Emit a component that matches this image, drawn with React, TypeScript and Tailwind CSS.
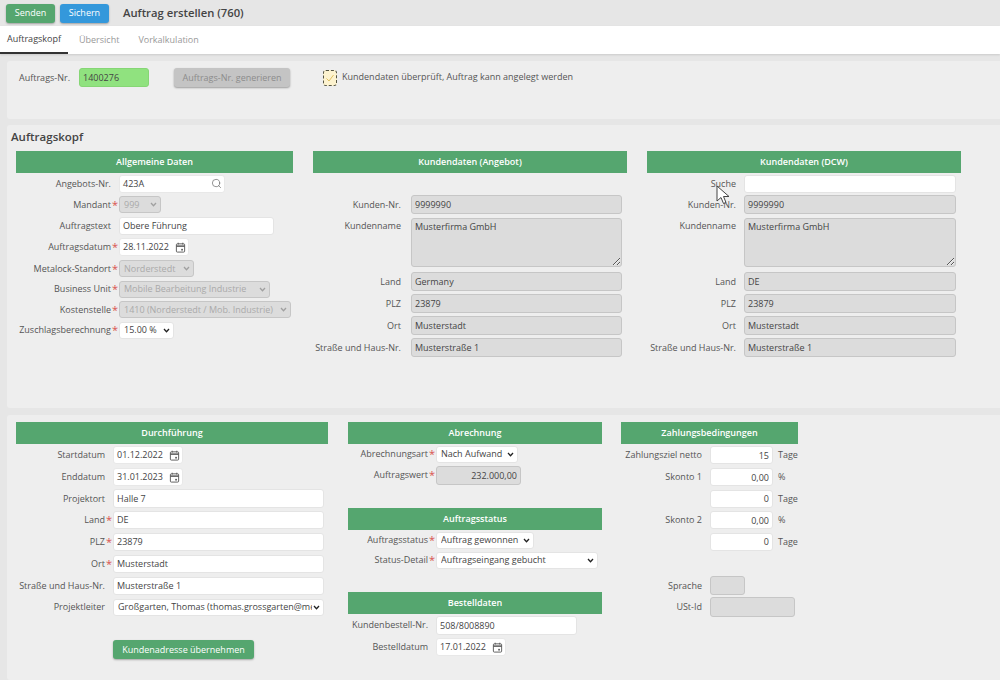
import React from "react";
import { Search } from "lucide-react";

const box = "block h-full w-full rounded-[3px] border px-[3px] text-[9px] text-[#444] outline-none";
const white = "bg-white border-[#e4e4e4]";
const gray = "bg-[#dcdcdc] border-[#c6c6c6]";

function Cal() {
  return (
    <svg viewBox="0 0 12 12" className="h-[11px] w-[11px] shrink-0" fill="none" stroke="#555" strokeWidth="1">
      <rect x="1.5" y="2" width="9" height="9" rx="1" />
      <path d="M1.5 4.5h9" strokeWidth="1.6" />
      <path d="M3.5 .8v2M8.5 .8v2" />
      <rect x="6.8" y="7.5" width="1.8" height="1.8" fill="#555" stroke="none" />
    </svg>
  );
}

function Header({ children }: { children: React.ReactNode }) {
  return (
    <div className="flex h-[22px] items-center justify-center bg-[#55a66f] text-[9px] font-semibold text-white">
      {children}
    </div>
  );
}

function Row({
  label,
  star,
  lw,
  h = 22,
  wide,
  children,
}: {
  label?: string;
  star?: boolean;
  lw: string;
  h?: number;
  wide?: boolean;
  children: React.ReactNode;
}) {
  return (
    <div className="flex items-center" style={{ height: h }}>
      <div className={`${lw} flex shrink-0 justify-end whitespace-nowrap text-[9px] text-[#555]`}>
        <span>{label}</span>
        <span className={`${wide ? "w-[10px]" : "w-[8px]"} inline-block pl-[1px] text-[11px] leading-[13px] text-[#d9534f]`}>{star ? "*" : ""}</span>
      </div>
      {children}
    </div>
  );
}

function Text({ v, w, gr, right, h = "h-[18px]" }: { v: string; w: string; gr?: boolean; right?: boolean; h?: string }) {
  return (
    <div className={`${w} ${h} shrink-0`}>
      <input readOnly value={v} className={`${box} ${gr ? gray : white} ${right ? "text-right" : ""}`} />
    </div>
  );
}

function DateF({ v }: { v: string }) {
  return (
    <div className="flex h-[18px] w-[70px] shrink-0 items-center justify-between rounded-[3px] border border-[#e8e8e8] bg-white pl-[3px] pr-[2px] text-[9px] text-[#444]">
      <span>{v}</span>
      <Cal />
    </div>
  );
}

function Sel({ v, w, disabled }: { v: string; w: string; disabled?: boolean }) {
  return (
    <div className={`${w} relative h-[17px] shrink-0`}>
      <select
        disabled={disabled}
        defaultValue={v}
        className={`block h-full w-full appearance-none rounded-[3px] border pl-[4px] pr-[11px] text-[9px] outline-none ${
          disabled ? "border-[#c6c6c6] bg-[#dcdcdc] text-[#aaa] opacity-100" : "border-[#e4e4e4] bg-white text-[#444]"
        }`}
      >
        <option>{v}</option>
      </select>
      <svg
        viewBox="0 0 8 6"
        className="pointer-events-none absolute right-[4px] top-[6px] h-[5px] w-[7px]"
        fill="none"
        stroke={disabled ? "#a0a0a0" : "#222"}
        strokeWidth="1.6"
      >
        <path d="M1 1.2 4 4.4l3-3.2" />
      </svg>
    </div>
  );
}

function Btn({ c, children }: { c: string; children: React.ReactNode }) {
  return (
    <button className={`flex h-[19px] w-[49px] items-center justify-center rounded-[3px] text-[9px] text-white shadow-[0_1px_2px_rgba(0,0,0,0.3)] ${c}`}>
      {children}
    </button>
  );
}

function Customer({ lw, land, suche, wide, f }: { lw: string; land: string; suche?: boolean; wide?: boolean; f: string }) {
  return (
    <div>
      {suche ? (
        <Row label="Suche" lw={lw} h={21} wide={wide}>
          <Text v="" w={f} />
        </Row>
      ) : (
        <div className="h-[21px]" />
      )}
      <Row label="Kunden-Nr." lw={lw} h={21} wide={wide}><Text v="9999990" w={f} gr h="h-[19px]" /></Row>
      <div className="flex pt-[3px]">
        <div className={`${lw} flex shrink-0 justify-end pt-px text-[9px] text-[#555]`}>
          <span>Kundenname</span><span className={wide ? "w-[10px]" : "w-[8px]"} />
        </div>
        <textarea
          readOnly
          value="Musterfirma GmbH"
          className={`${f} block h-[49px] shrink-0 rounded-[3px] border border-[#c6c6c6] bg-[#dcdcdc] px-[3px] py-[1px] text-[9px] text-[#444] outline-none`}
        />
      </div>
      <div className="flex flex-col gap-px pt-[4px]">
        <Row label="Land" lw={lw} h={21} wide={wide}><Text v={land} w={f} gr h="h-[19px]" /></Row>
        <Row label="PLZ" lw={lw} h={21} wide={wide}><Text v="23879" w={f} gr h="h-[19px]" /></Row>
        <Row label="Ort" lw={lw} h={21} wide={wide}><Text v="Musterstadt" w={f} gr h="h-[19px]" /></Row>
        <Row label="Straße und Haus-Nr." lw={lw} h={21} wide={wide}><Text v="Musterstraße 1" w={f} gr h="h-[19px]" /></Row>
      </div>
    </div>
  );
}

export default function App() {
  const l1 = "w-[103px]";
  const l4 = "w-[97px]";
  const l5 = "w-[88px]";
  const l6 = "w-[89px]";
  const f = "w-[211px]";
  const unit = "ml-[5px] text-[9px] text-[#555]";
  return (
    <div className="relative h-[680px] w-[1000px] overflow-hidden bg-[#e6e6e6] text-[#555]" style={{ fontFamily: '"Open Sans", sans-serif' }}>
      <div className="flex h-[26px] items-center gap-[5px] pl-[6px]">
        <Btn c="bg-[#55a66f]">Senden</Btn>
        <Btn c="bg-[#3498db]">Sichern</Btn>
        <div className="ml-[9px] text-[11.25px] font-semibold text-[#444]">Auftrag erstellen (760)</div>
      </div>

      <div className="flex h-[28px] items-center bg-white text-[9px] text-[#999] shadow-[0_1px_2px_rgba(0,0,0,0.12)]">
        <div className="flex h-full w-[68px] items-center justify-center border-b-2 border-[#333] text-[#444]">Auftragskopf</div>
        <span className="ml-[11px]">Übersicht</span>
        <span className="ml-[19px]">Vorkalkulation</span>
      </div>

      <div className="ml-[7px] mt-[7px] flex h-[58px] items-start rounded-l-[3px] bg-[#eeeeee] pl-[12px] pt-[7px] text-[9px]">
        <span className="mt-[3px] w-[60px]">Auftrags-Nr.</span>
        <input readOnly value="1400276" className="block h-[19px] w-[70px] rounded-[3px] border border-[#86d675] bg-[#90e27f] px-[3px] text-[9px] text-[#444] outline-none" />
        <button className="ml-[25px] block h-[19px] w-[116px] rounded-[3px] bg-[#c4c4c4] text-[9px] text-[#8c8c8c] shadow-[0_1px_2px_rgba(0,0,0,0.35)]">Auftrags-Nr. generieren</button>
        <div className="ml-[33px] mt-[2px] flex h-[16px] w-[14px] items-center justify-center rounded-[3px] border border-dashed border-[#554] bg-[#fdf3cf]">
          <svg viewBox="0 0 10 10" className="h-[10px] w-[10px]" fill="none" stroke="#e0c060" strokeWidth="1"><path d="M1.5 5.5 4 8l4.5-6" /></svg>
        </div>
        <span className="ml-[5px] mt-[2px]">Kundendaten überprüft, Auftrag kann angelegt werden</span>
      </div>

      <div className="ml-[7px] mt-[6px] h-[283px] rounded-l-[3px] bg-[#eeeeee] pl-[4px]">
        <div className="h-[26px] pt-[4px] text-[11.5px] leading-[16px] font-semibold text-[#444]">Auftragskopf</div>
        <div className="flex gap-[20px] pl-[5px]">
          <div className="w-[277px]">
            <Header>Allgemeine Daten</Header>
            <Row label="Angebots-Nr." lw={l1} h={21}>
              <div className="flex h-[18px] w-[106px] items-center justify-between rounded-[3px] border border-[#e8e8e8] bg-white pl-[3px] pr-[2px] text-[9px] text-[#444]">
                <span>423A</span><Search size={11} strokeWidth={1.5} color="#666" />
              </div>
            </Row>
            <Row label="Mandant" star lw={l1} h={21}><Sel v="999" w="w-[42px]" disabled /></Row>
            <Row label="Auftragstext" lw={l1} h={21}><Text v="Obere Führung" w="w-[155px]" /></Row>
            <Row label="Auftragsdatum" star lw={l1} h={22}><DateF v="28.11.2022" /></Row>
            <Row label="Metalock-Standort" star lw={l1} h={21}><Sel v="Norderstedt" w="w-[75px]" disabled /></Row>
            <Row label="Business Unit" star lw={l1} h={20}><Sel v="Mobile Bearbeitung Industrie" w="w-[151px]" disabled /></Row>
            <Row label="Kostenstelle" star lw={l1} h={21}><Sel v="1410 (Norderstedt / Mob. Industrie)" w="w-[172px]" disabled /></Row>
            <Row label="Zuschlagsberechnung" star lw={l1} h={20}><Sel v="15.00 %" w="w-[55px]" /></Row>
          </div>
          <div className="w-[314px]">
            <Header>Kundendaten (Angebot)</Header>
            <Customer lw="w-[98px]" land="Germany" wide f="w-[211px]" />
          </div>
          <div className="w-[314px]">
            <Header>Kundendaten (DCW)</Header>
            <Customer lw="w-[97px]" land="DE" suche f="w-[212px]" />
          </div>
        </div>
      </div>

      <div className="ml-[7px] mt-[7px] flex h-[265px] rounded-l-[3px] bg-[#eeeeee] pl-[9px] pt-[7px]">
        <div className="w-[312px]">
          <Header>Durchführung</Header>
          <Row label="Startdatum" lw={l4}><DateF v="01.12.2022" /></Row>
          <Row label="Enddatum" lw={l4}><DateF v="31.01.2023" /></Row>
          <Row label="Projektort" lw={l4} h={21}><Text v="Halle 7" w={f} h="h-[19px]" /></Row>
          <Row label="Land" star lw={l4} h={21}><Text v="DE" w={f} /></Row>
          <Row label="PLZ" star lw={l4} h={23}><Text v="23879" w={f} /></Row>
          <Row label="Ort" star lw={l4} h={21}><Text v="Musterstadt" w={f} /></Row>
          <Row label="Straße und Haus-Nr." lw={l4} h={23}><Text v="Musterstraße 1" w={f} /></Row>
          <Row label="Projektleiter" lw={l4} h={20}><Sel v="Großgarten, Thomas (thomas.grossgarten@metalock.de)" w={f} /></Row>
          <div className="pl-[97px] pt-[23px]">
            <button className="block h-[19px] w-[141px] rounded-[3px] bg-[#55a66f] text-[9px] text-white shadow-[0_1px_2px_rgba(0,0,0,0.3)]">Kundenadresse übernehmen</button>
          </div>
        </div>

        <div className="ml-[20px] w-[254px]">
          <Header>Abrechnung</Header>
          <Row label="Abrechnungsart" star lw={l5} h={20}><Sel v="Nach Aufwand" w="w-[82px]" /></Row>
          <Row label="Auftragswert" star lw={l5} h={22}><Text v="232.000,00" w="w-[85px]" gr right h="h-[19px]" /></Row>
          <div className="h-[22px]" />
          <Header>Auftragsstatus</Header>
          <Row label="Auftragsstatus" star lw={l5} h={20}><Sel v="Auftrag gewonnen" w="w-[98px]" /></Row>
          <Row label="Status-Detail" star lw={l5} h={20}><Sel v="Auftragseingang gebucht" w="w-[162px]" /></Row>
          <div className="h-[22px]" />
          <Header>Bestelldaten</Header>
          <Row label="Kundenbestell-Nr." lw={l5}><Text v="508/8008890" w="w-[141px]" h="h-[19px]" /></Row>
          <Row label="Bestelldatum" lw={l5}><DateF v="17.01.2022" /></Row>
        </div>

        <div className="ml-[19px] w-[177px]">
          <Header>Zahlungsbedingungen</Header>
          <Row label="Zahlungsziel netto" lw={l6}><Text v="15" w="w-[63px]" right /><span className={unit}>Tage</span></Row>
          <Row label="Skonto 1" lw={l6}><Text v="0,00" w="w-[63px]" right /><span className={unit}>%</span></Row>
          <Row label="" lw={l6} h={21}><Text v="0" w="w-[63px]" right /><span className={unit}>Tage</span></Row>
          <Row label="Skonto 2" lw={l6}><Text v="0,00" w="w-[63px]" right /><span className={unit}>%</span></Row>
          <Row label="" lw={l6} h={21}><Text v="0" w="w-[63px]" right /><span className={unit}>Tage</span></Row>
          <div className="h-[23px]" />
          <Row label="Sprache" lw={l6} h={21}><Text v="" w="w-[35px]" gr h="h-[19px]" /></Row>
          <Row label="USt-Id" lw={l6}><Text v="" w="w-[85px]" gr h="h-[20px]" /></Row>
        </div>
      </div>

      <svg viewBox="0 0 16 22" className="absolute left-[716px] top-[185px] h-[22px] w-[16px]" fill="#fff" stroke="#444" strokeWidth="1">
        <path d="M1 1v15l4-3.5 2.5 6 2.5-1-2.5-6H13z" />
      </svg>
    </div>
  );
}
